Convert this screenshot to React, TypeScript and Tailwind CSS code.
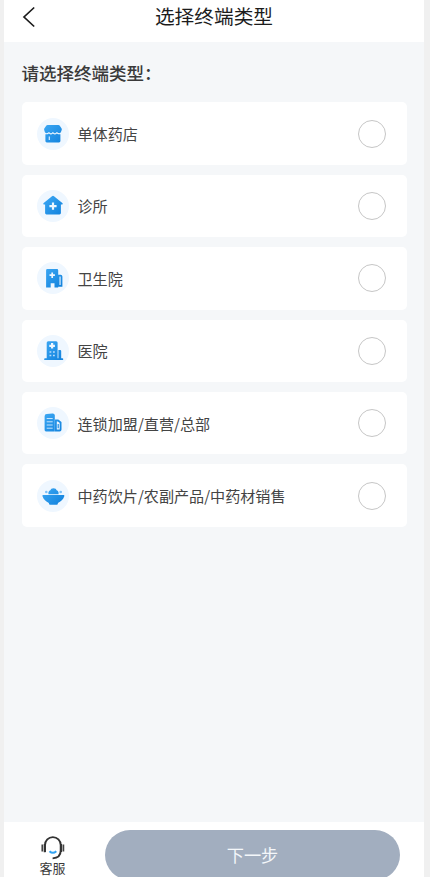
import type { ReactNode } from "react";

const BLUE = "url(#icon-blue)";

const StoreIcon = () => (
  <>
    <path
      fill={BLUE}
      d="M10.6 7h10.8a1.5 1.5 0 011.2.6l2 2.9c.3.5.3 1 .1 1.500l-.8 2.300c-.9 1.100-2.100 1.200-3 .5l-1-.7-1.200.8c-.6.4-1.200.4-1.700 0l-1.100-.8-1.100.8c-.5.4-1.100.4-1.700 0l-1.100-.8-1.100.7c-.9.7-2.100.6-3-.5L7.200 12c-.2-.5-.1-1 .1-1.500l2.100-2.900a1.5 1.5 0 011.200-.6z"
    />
    <path
      fill={BLUE}
      d="M8.4 16.3c1.4.2 2.4-.1 3.5-.8l1.3.7c.8.4 1.3.3 2.700-.7 1.400 1 1.900 1.100 2.700.7l1.300-.7c1.100.7 2.200 1 3.500.8v6.700a1.400 1.400 0 01-1.400 1.400H9.800A1.400 1.400 0 018.400 23z"
    />
    <path stroke="#d8edff" strokeWidth="1.2" d="M12.3 18.500v3.500" />
  </>
);

const ClinicIcon = () => (
  <>
    <path
      fill={BLUE}
      d="M15 6.200a1.600 1.600 0 012 0l8.300 6.700c.8.7.4 1.700-.6 1.700h-.8V23a1.400 1.400 0 01-1.400 1.400h-13A1.400 1.400 0 018.100 23v-8.400h-.8c-1 0-1.400-1-.6-1.700z"
    />
    <path stroke="#eef7ff" strokeWidth="2.2" d="M16 12.500v7.200M12.400 16.100h7.200" />
  </>
);

const HealthCenterIcon = () => (
  <>
    <path
      fill={BLUE}
      d="M10.300 7h9.700a1.200 1.200 0 011.200 1.200v17.200h-3.700v-4.200h-3.800v4.200H9.100V8.200A1.200 1.200 0 0110.300 7z"
    />
    <path stroke="#eef7ff" strokeWidth="1.7" d="M15.200 10.500v5.400M12.500 13.200h5.400" />
    <path stroke={BLUE} strokeWidth="1.8" d="M21.600 13.700h2a.9.9 0 01.9.9v9.300h-2.900z" />
  </>
);

const HospitalIcon = () => (
  <>
    <path
      fill={BLUE}
      d="M11.200 6.200h7.900a1.500 1.500 0 011.500 1.500V24.500H9.700V7.700a1.500 1.500 0 011.500-1.500z"
    />
    <path fill={BLUE} d="M21.400 15h1.800a1 1 0 011 1v8.500h-2.800z" />
    <path stroke={BLUE} strokeWidth="1.7" strokeLinecap="round" d="M8 24.200h17.400" />
    <path stroke="#eef7ff" strokeWidth="2.2" d="M15.100 8v5.600M12.300 10.800h5.600" />
    <path
      stroke="#b8dcfa"
      strokeWidth="1.5"
      d="M12.500 17h1.800M16 17h1.800M12.500 20.500h1.800M16 20.500h1.800"
    />
  </>
);

const ChainIcon = () => (
  <>
    <path
      fill={BLUE}
      d="M9.700 7.100l5.700-.7c.5 0 .9.1 1.200.3l1.200 1v16.700H9a1.400 1.400 0 01-1.400-1.400V9.200a2.100 2.100 0 012.100-2.100z"
    />
    <path
      stroke="#c5e3fc"
      strokeWidth="1"
      d="M9.700 11.500h6M9.700 14.800h6M9.700 18h6M9.700 21.200h6"
    />
    <path
      stroke={BLUE}
      strokeWidth="1.8"
      d="M18.900 13.500h2.100l2.600 2v7a1 1 0 01-1 1h-3.700z"
    />
    <path stroke={BLUE} strokeWidth="1.2" d="M21.200 17v4.300" />
  </>
);

const HerbIcon = () => (
  <>
    <path
      fill={BLUE}
      d="M6.300 14.900h20.200c.7 0 1.100.6.9 1.200-1.200 3.500-3.500 5.700-6.500 6.900v.4a1.400 1.400 0 01-1.400 1.400h-6.200a1.400 1.400 0 01-1.400-1.400V23c-3-1.200-5.300-3.400-6.500-6.900-.2-.6.2-1.200.9-1.200z"
    />
    <path
      fill={BLUE}
      d="M11.500 14.200c-.5-2 .5-3.400 1.600-3.600a3.600 3.600 0 016.800 0c1.100.2 2.100 1.600 1.600 3.600z"
    />
    <circle cx="9.3" cy="12" r="1.3" fill="#7cc1f7" />
    <circle cx="23.7" cy="12" r="1.3" fill="#7cc1f7" />
  </>
);

const terminalTypes: { id: string; label: string; icon: ReactNode }[] = [
  { id: "store", label: "单体药店", icon: <StoreIcon /> },
  { id: "clinic", label: "诊所", icon: <ClinicIcon /> },
  { id: "health-center", label: "卫生院", icon: <HealthCenterIcon /> },
  { id: "hospital", label: "医院", icon: <HospitalIcon /> },
  { id: "chain", label: "连锁加盟/直营/总部", icon: <ChainIcon /> },
  { id: "herb", label: "中药饮片/农副产品/中药材销售", icon: <HerbIcon /> },
];

const App = () => {
  return (
    <div className="h-[877px] overflow-hidden bg-[#f0f0f0] pr-[6px] pl-1 font-['Noto_Sans_CJK_SC',sans-serif]">
      {/* Shared icon gradient */}
      <svg className="absolute h-0 w-0">
        <defs>
          <linearGradient
            id="icon-blue"
            gradientUnits="userSpaceOnUse"
            x1="8"
            y1="8"
            x2="24"
            y2="24"
          >
            <stop stopColor="#39a5f2" />
            <stop offset="1" stopColor="#1484de" />
          </linearGradient>
        </defs>
      </svg>

      <div className="flex h-full flex-col bg-[#f5f7f9]">
        {/* Header */}
        <header className="grid h-[42px] shrink-0 grid-cols-[1fr_auto_1fr] items-start bg-white">
          <button className="mt-[6px] ml-[18px] w-4" aria-label="返回">
            <svg className="h-[22px] w-4" viewBox="0 0 16 22" fill="none">
              <path d="M12.200 1.500L2 11l10.200 9.500" stroke="#1c1c1c" strokeWidth="1.7" />
            </svg>
          </button>
          <h1 className="text-[19.7px] leading-[32px] text-[#1c1c1c]">
            选择终端类型
          </h1>
        </header>

        {/* Type list */}
        <main className="flex-1 pr-4 pl-[17.5px]">
          <h2 className="pt-[17px] text-[17.5px] leading-[28px] font-medium text-[#3a3a3a]">
            请选择终端类型：
          </h2>
          <div className="mt-[15.4px] flex flex-col gap-[10px]">
            {terminalTypes.map((type) => (
              <label
                key={type.id}
                className="flex h-[62.4px] w-[385.5px] items-center rounded-[5px] bg-white pr-[21px] pl-[15.5px]"
              >
                <svg
                  className="h-8 w-8 shrink-0 rounded-full bg-[#eff7ff]"
                  viewBox="0 0 32 32"
                  fill="none"
                >
                  {type.icon}
                </svg>
                <span className="ml-[8.5px] flex-1 pb-px text-[15.1px] leading-6 text-[#444]">
                  {type.label}
                </span>
                <input
                  type="radio"
                  name="terminal"
                  className="h-7 w-7 appearance-none rounded-full border border-[#c6c6c6]"
                />
              </label>
            ))}
          </div>
        </main>

        {/* Bottom bar */}
        <footer className="flex h-[55.5px] shrink-0 items-start bg-white">
          <button className="mt-[14.5px] ml-[28px] flex w-[41px] flex-col items-center">
            <svg className="h-6 w-6 shrink-0" viewBox="0 0 24 24" fill="none">
              <path
                d="M4 16V9a7.700 7.700 0 0115.700 0v5.500c0 4.800-3 7.600-8.100 7.900"
                stroke="#333"
                strokeWidth="1.9"
              />
              <path d="M1.300 8.500v7M22.400 8.500v7" stroke="#444" strokeWidth="1.7" />
              <path d="M3.700 8v8.300M20.100 8v8" stroke="#333" strokeWidth="1.9" />
              <path
                d="M8.500 15.200c2 1.900 4.800 1.900 6.800 0"
                stroke="#32a3f2"
                strokeWidth="2"
              />
            </svg>
            <span className="text-[13px] leading-4 text-[#3a3a3a]">客服</span>
          </button>
          <button className="mt-2 ml-8 h-[50px] w-[295px] shrink-0 rounded-full bg-[#a2aebf] text-[17.2px] text-[#f4f7fa]">
            下一步
          </button>
        </footer>
      </div>
    </div>
  );
};

export default App;
